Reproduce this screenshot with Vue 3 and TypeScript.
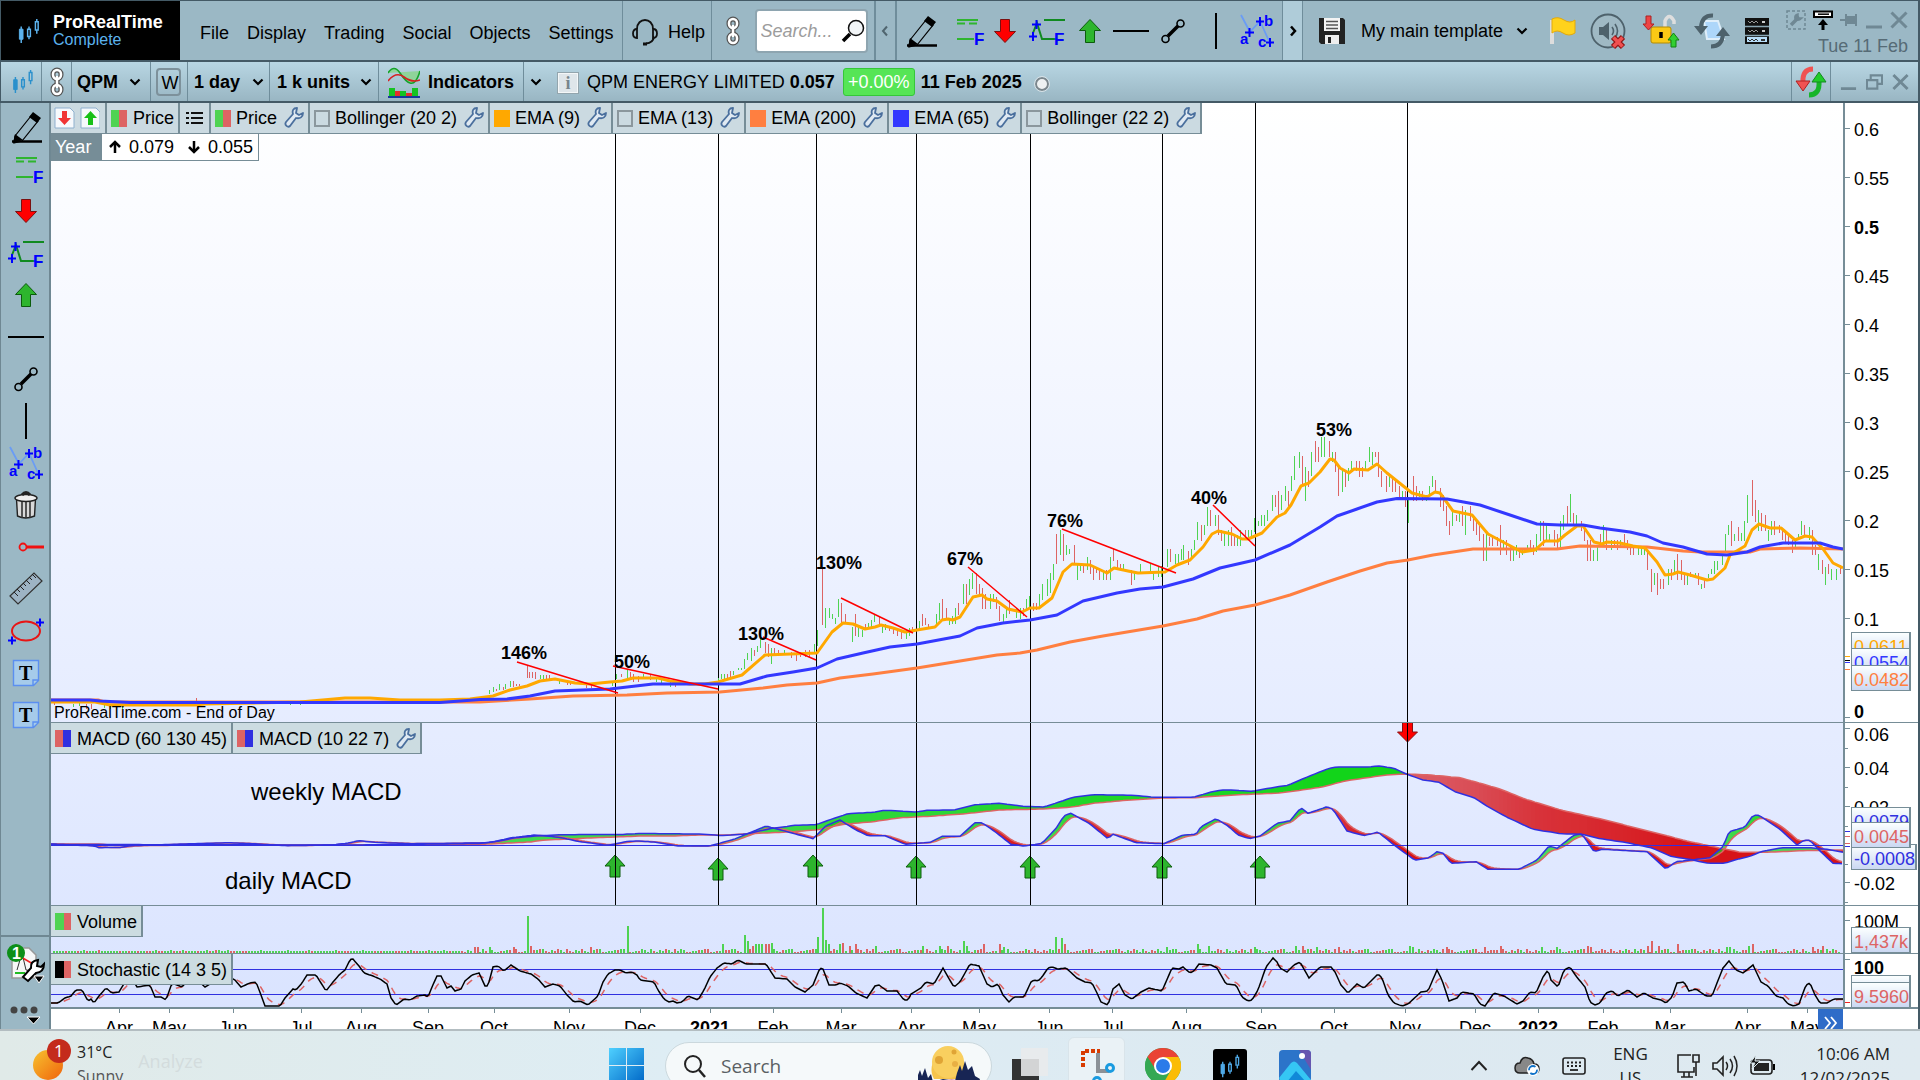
<script setup lang="ts">
import { ref } from 'vue'

type Point = [number, number]

interface Legend {
  label: string
  colors: string[]
  wrench: boolean
  on: boolean
}

interface AxisLabel {
  text: string
  y: number
  bold?: boolean
}

interface PriceTag {
  text: string
  y: number
  color: string
  wide?: boolean
}

// Shared drawing space of the stacked panes
const LEFT = 51
const WIDTH = 1792

const left = (x: number): string => `${((x - LEFT) / WIDTH) * 100}%`
const top = (y: number, y0: number, h: number): string => `${((y - y0) / h) * 100}%`

function points(src: string): Point[] {
  const n = src.trim().split(/\s+/).map(Number)
  const out: Point[] = []
  for (let i = 0; i + 1 < n.length; i += 2) out.push([n[i], n[i + 1]])
  return out
}

function line(pts: Point[]): string {
  return 'M' + pts.map((p) => `${p[0]} ${p[1].toFixed(1)}`).join('L')
}

function resample(pts: Point[], step: number): Point[] {
  const out: Point[] = []
  let k = 0
  for (let x = LEFT; x <= LEFT + WIDTH; x += step) {
    while (k < pts.length - 2 && pts[k + 1][0] < x) k++
    const [x0, y0] = pts[k]
    const [x1, y1] = pts[k + 1]
    const t = Math.min(1, Math.max(0, (x - x0) / (x1 - x0)))
    out.push([x, y0 + (y1 - y0) * t])
  }
  return out
}

function smooth(pts: Point[], factor: number): Point[] {
  let s = pts[0][1]
  return pts.map(([x, y]): Point => {
    s += (y - s) * factor
    return [x, s]
  })
}

interface Band {
  d: string
  fill: string
  opacity: number
}

// Green deepens as the oscillator climbs, red as it falls
function bands(fast: Point[], slow: Point[]): Band[] {
  const out: Band[] = []
  for (let i = 0; i + 1 < fast.length; i++) {
    const gap = (slow[i][1] - fast[i][1] + slow[i + 1][1] - fast[i + 1][1]) / 2
    if (Math.abs(gap) < 0.6) continue
    const y = (fast[i][1] + slow[i][1]) / 2
    const strength = gap > 0 ? 0.75 + (845 - y) / 250 : 0.65 + (y - 770) / 230
    out.push({
      d: line([fast[i], fast[i + 1], slow[i + 1], slow[i]]) + 'Z',
      fill: gap > 0 ? '#12d41a' : '#d61318',
      opacity: Math.min(1, Math.max(0.6, strength))
    })
  }
  return out
}

function bars(src: string): string {
  const n = src.trim().split(/\s+/).map(Number)
  let d = ''
  for (let i = 0; i + 2 < n.length; i += 3) d += `M${n[i] + 0.5} ${n[i + 1]}V${n[i + 2]}`
  return d
}

const ema200 = line(points(`51 700 98 700 105 702 350 702 480 702 530 699 573 696 627 695 667 693 720 692 763 688 787 685
817 683 840 678 873 674 917 668 960 661 997 655 1020 653 1037 650 1070 642 1103 636 1133 631 1163 626 1197 619 1223 611
1255 605 1290 595 1327 582 1360 571 1387 563 1408 560 1433 555 1473 549 1557 549 1580 546 1647 547 1683 551 1700 552
1750 552 1760 549 1800 548 1843 549`))

const ema65 = line(points(`51 700 90 700 100 701 130 702.5 440 702.5 480 699.5 507 699 530 696 555 691 610 689 653 684
740 684 767 676 793 672 817 668 837 659 863 653 890 647 917 644 960 636 977 628 1003 623 1030 620 1057 615 1083 601
1117 593 1140 589 1163 587 1193 579 1220 568 1255 560 1290 545 1320 527 1337 516 1357 509 1377 502 1397 498.5 1447 499
1480 505 1510 515 1537 524 1560 525 1583 525 1600 528 1630 532 1647 536 1663 543 1683 547 1707 554 1727 555 1747 552
1760 547 1783 543 1820 543 1833 547 1843 549`))

const ema9 = line(points(`51 702 95 702 110 705 195 705 205 704 300 702 345 698 370 698 400 700 440 700 470 699 493 696
510 690 527 686 540 681 555 679 575 683 590 684 610 682 622 681 633 678 658 678 670 681 690 684 705 684 718 682 742 675
765 655 817 653 832 632 843 623 853 624 865 629 875 627 881 625 893 628 905 632 917 630 935 627 942 620 948 619 953 620
960 617 973 597 982 595 987 599 997 601 1008 609 1022 612 1030 608 1039 608 1052 598 1063 572 1072 564 1090 565 1107 573
1114 568 1128 571 1138 573 1165 572 1177 565 1190 560 1203 547 1212 534 1218 531 1232 534 1242 539 1248 539 1262 533
1277 517 1285 513 1291 505 1301 486 1309 483 1320 472 1330 459 1334 460 1340 468 1349 473 1354 469 1368 470 1377 464
1387 473 1402 485 1412 493 1427 497 1435 492 1440 493 1453 511 1472 515 1488 534 1503 542 1522 552 1535 550 1545 541
1558 541 1565 535 1577 526 1583 526 1594 542 1602 544 1607 542 1620 543 1633 546 1645 548 1657 562 1665 575 1673 574
1678 572 1690 575 1707 580 1713 579 1725 568 1730 555 1745 546 1752 530 1759 524 1770 528 1781 528 1795 540 1805 536
1812 537 1823 549 1833 563 1843 568`))

const risingBars = bars(`73 704 707 79 703 706 104 703 708 110 704 709 122 705 709 290 702 705 300 702 705 489 690 694 493 687 692
499 684 690 505 684 689 510 681 687 540 675 679 543 675 679 559 680 684 612 681 686 616 674 679 627 670 678 643 674 678
656 677 682 661 678 683 670 682 687 718 678 682 721 674 679 724 674 679 733 671 675 738 668 670 741 668 670 744 659 669
747 653 660 751 648 661 757 646 652 760 637 648 771 648 664 784 650 655 814 644 653 817 630 646 825 608 628 829 608 618
832 614 619 835 618 624 838 599 617 852 627 642 858 628 637 862 630 637 868 623 627 871 620 627 874 614 622 882 625 633
885 624 630 906 632 639 909 628 636 919 621 629 936 614 625 939 603 620 949 618 625 952 616 624 955 608 624 963 584 604
969 579 595 972 573 589 990 594 609 993 594 602 1003 614 622 1006 608 618 1016 608 618 1020 608 619 1026 599 610
1029 596 608 1039 594 609 1042 584 600 1047 579 596 1050 573 593 1053 564 580 1060 530 555 1066 545 555 1069 549 554
1077 564 580 1080 565 571 1087 557 570 1103 570 580 1110 557 580 1123 564 570 1134 571 580 1140 564 573 1150 564 573
1153 571 580 1158 566 577 1161 566 577 1167 549 567 1175 554 564 1178 554 563 1181 549 560 1183 545 560 1191 549 558
1194 540 550 1197 522 540 1204 525 535 1207 507 526 1215 515 526 1224 533 546 1228 530 546 1237 535 546 1240 530 546
1248 530 538 1251 530 538 1254 518 532 1258 521 526 1261 515 526 1264 515 526 1267 510 521 1272 495 511 1281 495 510
1285 486 501 1291 476 491 1294 456 480 1299 452 468 1305 467 501 1311 452 476 1321 437 457 1324 437 457 1332 452 462
1342 470 492 1348 468 481 1351 461 471 1365 461 471 1369 447 462 1372 452 465 1389 476 487 1402 491 500 1408 497 523
1419 491 497 1426 495 501 1429 486 495 1432 476 487 1452 510 526 1459 511 522 1465 510 535 1486 534 561 1503 540 550
1513 550 561 1516 545 555 1522 550 555 1527 545 550 1536 534 552 1540 521 541 1546 525 541 1549 534 541 1560 521 547
1563 515 530 1570 494 522 1576 515 526 1593 550 561 1597 545 561 1603 525 545 1611 540 550 1620 540 547 1638 547 555
1641 547 555 1644 548 555 1654 573 585 1668 569 585 1674 560 573 1687 573 585 1695 573 577 1701 584 589 1708 574 578
1711 569 574 1714 561 574 1717 561 570 1722 555 565 1725 534 553 1728 525 535 1734 534 541 1741 533 541 1744 521 541
1747 495 523 1758 510 531 1768 530 541 1771 521 535 1795 540 549 1798 534 540 1801 521 535 1809 527 540 1818 554 570
1825 567 585 1831 569 580 1836 569 580`)

const fallingBars = bars(`54 702 705 86 704 709 91 704 709 116 705 709 196 698 705 496 689 691 503 687 690 513 681 687 516 684 686
519 684 686 527 665 678 529 672 678 532 672 678 535 672 679 546 675 679 549 675 680 567 681 685 570 681 685 586 684 688
591 684 688 621 674 677 630 672 678 633 674 682 638 676 682 650 675 680 675 683 687 727 674 679 730 671 677 754 650 656
765 642 653 768 644 657 774 648 656 778 650 655 791 652 658 796 653 661 800 652 657 805 650 657 809 650 657 822 569 625
841 603 623 845 614 623 855 614 636 865 624 630 879 616 624 889 626 631 893 628 634 897 630 636 901 630 639 912 627 633
922 614 626 925 618 625 928 624 629 942 599 619 946 608 618 958 603 615 966 584 604 976 573 594 979 584 595 982 588 609
985 594 609 996 597 609 999 606 621 1009 600 614 1023 608 616 1033 603 611 1036 603 610 1056 534 564 1063 534 561
1074 545 565 1083 566 573 1090 560 574 1093 566 580 1096 568 573 1099 568 580 1106 570 580 1113 549 561 1117 560 570
1120 564 570 1131 570 585 1170 549 562 1188 551 565 1201 525 541 1210 510 526 1218 515 535 1221 530 541 1231 527 546
1234 534 546 1245 530 538 1275 495 507 1278 491 515 1288 491 507 1302 456 485 1308 471 487 1315 441 462 1318 447 462
1329 441 457 1335 452 472 1338 466 496 1345 471 487 1356 461 471 1359 461 477 1362 467 477 1375 452 457 1378 452 477
1381 471 487 1386 476 492 1392 476 492 1395 481 492 1399 486 497 1405 491 507 1413 476 501 1416 486 501 1422 491 501
1435 480 492 1440 488 507 1443 495 511 1446 506 526 1449 521 535 1456 515 521 1462 506 526 1470 506 521 1473 515 531
1476 521 535 1479 526 541 1483 534 561 1489 537 546 1492 537 546 1497 537 546 1500 525 555 1506 540 555 1510 545 561
1519 550 558 1530 540 550 1533 545 555 1543 521 546 1554 530 546 1557 534 548 1567 506 525 1573 513 525 1581 521 531
1584 526 541 1587 540 561 1590 540 561 1600 534 547 1606 530 550 1614 540 548 1617 540 550 1624 534 547 1627 540 550
1630 545 555 1633 547 555 1647 550 570 1651 569 592 1657 573 595 1660 579 589 1663 579 589 1671 569 580 1677 554 580
1681 560 580 1684 573 585 1690 572 577 1698 573 585 1704 580 588 1731 521 546 1738 527 541 1752 480 516 1755 500 522
1761 513 531 1765 515 531 1774 521 535 1779 525 533 1782 530 540 1785 530 542 1788 535 545 1792 540 553 1804 525 535
1812 530 555 1815 545 555 1822 560 574 1828 564 574 1840 565 574`)

const weekly = resample(points(`51 844.5 350 845 480 843.5 500 841 513 838 535 836 560 834.7 620 834.5 640 833.5 701 834
722 835.7 746 834 771 828.5 795 825.3 816 824.7 832 819 848 813.7 873 812.3 885 810.3 917 812 926 810.3 954 810 975 804.7
999 803.3 1024 806.3 1044 807 1060 801.7 1073 797.3 1093 794.7 1134 795.3 1154 797.3 1193 797.3 1211 792 1224 789.7
1252 791.3 1280 786.3 1288 785.3 1304 778.3 1329 768.3 1337 767 1370 767 1378 765.7 1394 768.3 1407 774.3 1423 780
1439 782.3 1455 791.7 1474 797.7 1488 806.7 1508 817.7 1533 829.3 1561 833.7 1582 834.3 1598 838.3 1627 842.7 1651 847.7
1672 856.7 1688 859 1708 863.3 1725 863.3 1737 859.3 1749 856.7 1761 851.7 1782 847.7 1810 847.7 1827 849.3 1843 852.3`), 4)

const weeklySignal = resample(points(`51 844 100 844 115 845.5 480 844.5 530 842 545 840 590 838 640 836 671 836 701 835
726 835 758 833.3 783 832.3 816 830 844 824.3 873 821.7 901 817.7 934 816 966 813.7 999 810 1044 809 1073 807 1093 803.3
1126 800.3 1162 798 1195 797.7 1228 795.3 1280 793 1321 787.3 1345 781 1370 777.3 1390 774.7 1407 774 1431 775 1460 777.7
1476 782 1500 789 1525 799 1561 810 1602 819.3 1635 827.7 1664 835 1688 841.3 1721 848.3 1741 852.3 1766 852.3
1802 850.7 1843 850`), 4)

const daily = resample(points(`51 844 95 846 98 847.7 120 847.5 131 845.7 173 844.3 229 842.7 253 843.7 286 845.7 331 845
347 843.3 359 840.7 375 842.3 412 843.7 477 843 490 842.5 510 838 535 835 559 837.3 580 841.7 608 845.3 628 841.3
640 841 656 842.3 677 846 709 846 734 839.3 766 826 787 831.7 813 838.7 826 825.7 840 820 856 830 868 835.7 885 835.7
905 844.3 930 842.3 942 836.3 960 836.3 975 822.7 982 822.7 995 831.7 1011 844.3 1024 846 1042 843.3 1056 828.3
1064 815.7 1071 813.3 1089 823.3 1108 838.7 1113 834.3 1136 842.7 1164 843.7 1183 835 1196 834.3 1201 826.7 1216 818.7
1228 826 1238 835 1250 838.7 1260 836 1277 823.3 1290 820.7 1301 807.7 1308 813.3 1327 806.7 1333 809.3 1347 831
1364 835.7 1378 832 1394 845 1415 860.3 1429 857.7 1437 851.7 1443 853.3 1451 863.3 1476 861.7 1488 869.3 1519 869.3
1537 860 1549 846 1557 848.3 1574 835 1582 834 1594 851.7 1602 849.3 1647 851.7 1666 869 1676 861.7 1710 857.7
1723 846.7 1729 831.7 1745 827 1753 815.3 1759 815.3 1780 829.3 1797 845 1804 840.3 1810 840.3 1819 850 1833 863.3
1843 863.7`), 3)

const dailySignal = smooth(daily, 0.32)
const macdBands = [...bands(weekly, weeklySignal), ...bands(daily, dailySignal)]

const stochasticK = resample(points(`52 1003 58 1003 65 998 71 996 76 990 82 990 88 1001 91 999 94 1003 99 996 106 988 112 993
119 992 125 982 130 975 137 987 150 985 155 997 161 997 166 1000 172 983 182 987 192 975 205 987 220 978 234 979 241 987
250 983 256 982 261 995 265 1006 280 1006 285 998 293 989 296 990 302 983 307 975 316 975 326 991 333 982 340 974 345 970
349 962 352 958 359 966 364 973 373 976 380 979 387 984 391 998 396 1005 404 999 410 1000 417 996 425 995 428 997 432 987
437 976 441 976 447 988 451 986 455 991 461 989 465 981 472 975 479 973 486 988 489 982 493 967 498 966 504 971 511 965
520 971 531 974 538 979 545 987 553 984 560 986 567 995 574 1002 580 1001 588 1005 598 996 603 982 608 974 615 970 620 970
626 973 632 972 637 975 640 980 654 982 658 990 664 999 669 1002 673 1001 677 1003 682 1002 688 996 698 1000 704 990
710 977 717 968 724 963 732 964 738 960 746 964 766 964 775 978 787 979 795 987 805 992 813 985 820 968 823 969 829 985
836 985 840 983 848 986 856 993 867 998 875 986 879 985 887 991 897 991 904 1000 908 1000 911 994 921 988 926 982 934 984
943 968 948 977 954 987 960 982 970 964 979 966 987 984 992 987 998 984 1003 995 1009 1002 1014 997 1024 997 1031 982
1034 980 1038 981 1042 977 1048 968 1052 967 1058 969 1066 968 1077 978 1085 982 1092 983 1097 993 1101 1002 1108 1005
1113 989 1119 984 1125 995 1132 999 1141 992 1149 988 1162 991 1172 968 1179 969 1183 967 1190 973 1194 971 1199 964
1211 965 1217 968 1226 984 1236 985 1242 997 1248 1001 1252 1000 1258 990 1266 967 1273 958 1277 962 1280 968 1287 972
1294 965 1300 962 1309 978 1320 967 1331 967 1335 972 1341 985 1348 993 1357 984 1364 988 1378 974 1382 978 1388 995
1394 1003 1402 1006 1408 1004 1421 992 1428 991 1437 970 1442 980 1449 1001 1457 998 1462 992 1474 994 1480 1004 1485 1006
1494 993 1504 996 1517 1004 1523 1001 1530 992 1536 993 1543 977 1548 970 1551 980 1558 987 1564 970 1570 967 1576 976
1585 987 1590 1002 1595 1005 1600 1003 1606 993 1612 991 1618 996 1628 990 1637 997 1644 993 1653 998 1661 1000 1666 1003
1672 997 1677 983 1684 982 1689 991 1696 989 1706 996 1712 996 1717 983 1723 968 1729 961 1736 970 1743 973 1753 965
1761 982 1768 986 1776 996 1783 998 1788 1004 1794 1006 1799 1004 1806 985 1810 983 1815 995 1820 1003 1827 1003 1834 999
1843 999`), 2)
const stochasticD = smooth(stochasticK, 0.25)

// Volume: quiet sessions get a short bar, busy sessions are listed
function volume(): { up: string; down: string } {
  const busyUp = points(`490 6 528 37 628 27 723 9 745 18 748 12 756 9 759 9 762 9 772 10 818 16 823 45 826 13 829 9 840 9 876 7
923 7 940 7 964 12 967 7 1004 6 1056 16 1062 15 1167 6 1198 9 1209 7 1255 6 1296 7 1317 6 1410 7 1413 6 1542 6 1557 6
1727 6 1730 6 1749 7`)
  const busyDown = points(`475 6 478 6 514 6 531 7 591 6 753 7 766 9 769 9 843 10 850 7 856 9 948 7 984 9 1000 9 1065 9 1303 7
1339 6 1447 6 1485 6 1501 7 1588 7 1591 6 1648 7 1652 12 1659 7 1678 9 1753 9 1813 6 1823 7`)
  const busy = [...busyUp, ...busyDown].map((p) => p[0])
  const bar = (x: number, h: number): string => `M${x} 953V${953 - h}`
  let up = busyUp.map((p) => bar(p[0], p[1])).join('')
  let down = busyDown.map((p) => bar(p[0], p[1])).join('')
  let seed = 7
  for (let x = 54; x < 1842; x += 3) {
    seed = (seed * 1103 + 12345) % 65536
    if (busy.some((b) => Math.abs(b - x) < 2)) continue
    const h = x < 460 ? (seed % 11 === 0 ? 3 : 2) : 1 + ((seed >> 7) % 4)
    if ((seed >> 4) % 10 < (x < 460 ? 3 : 5)) down += bar(x, h)
    else up += bar(x, h)
  }
  return { up, down }
}
const volumeBars = volume()

const cycles = [615, 718, 816, 916, 1030, 1162, 1255, 1407]
const buyArrows: Point[] = [[615, 855], [718, 858], [813, 855], [916, 856], [1030, 856], [1162, 856], [1260, 856]]
const trendLines = 'M517 662L618 693M613 666L718 689M763 637L816 660M841 598L913 633M968 567L1027 617M1062 529L1176 573M1213 505L1255 546'

const gains = [
  { text: '146%', x: 501, y: 644 },
  { text: '50%', x: 614, y: 653 },
  { text: '130%', x: 738, y: 625 },
  { text: '130%', x: 816, y: 554 },
  { text: '67%', x: 947, y: 550 },
  { text: '76%', x: 1047, y: 512 },
  { text: '40%', x: 1191, y: 489 },
  { text: '53%', x: 1316, y: 421 }
]

const priceLegend = ref<Legend[]>([
  { label: 'Price', colors: ['#4fd352', '#dd6464'], wrench: true, on: true },
  { label: 'Bollinger (20 2)', colors: [], wrench: true, on: false },
  { label: 'EMA (9)', colors: ['#ffa800'], wrench: true, on: true },
  { label: 'EMA (13)', colors: [], wrench: true, on: false },
  { label: 'EMA (200)', colors: ['#ff7f40'], wrench: true, on: true },
  { label: 'EMA (65)', colors: ['#3338ff'], wrench: true, on: true },
  { label: 'Bollinger (22 2)', colors: [], wrench: true, on: false }
])
const macdLegend = ref<Legend[]>([
  { label: 'MACD (60 130 45)', colors: ['#dd6464', '#3030e0'], wrench: false, on: true },
  { label: 'MACD (10 22 7)', colors: ['#dd6464', '#3030e0'], wrench: true, on: true }
])

function swatch(item: Legend): Record<string, string> {
  if (!item.colors.length) return {}
  const [a, b] = item.colors
  return { background: `linear-gradient(90deg, ${a} 50%, ${b ?? a} 50%)`, border: '0' }
}

const priceAxis: AxisLabel[] = [0.6, 0.55, 0.5, 0.45, 0.4, 0.35, 0.3, 0.25, 0.2, 0.15, 0.1, 0].map((v) => ({
  text: String(v),
  y: 716.5 - v * 981,
  bold: v === 0.5 || v === 0
}))
const macdAxis: AxisLabel[] = [
  { text: '0.06', y: 728 },
  { text: '0.04', y: 767 },
  { text: '0.02', y: 806 },
  { text: '-0.02', y: 882 }
]
const macdMinor = [748, 787, 826, 864, 902]
const priceTags: PriceTag[] = [
  { text: '0.0611', y: 632, color: '#ffa800' },
  { text: '0.0554', y: 648, color: '#3338ff' },
  { text: '0.0482', y: 665, color: '#ff7f40' }
]
const macdTags: PriceTag[] = [
  { text: '-0.0008', y: 844, color: '#3030e0', wide: true },
  { text: '0.0079', y: 807, color: '#3030e0' },
  { text: '0.0045', y: 822, color: '#dd6464' }
]
const priceMarks = [{ y: 656, c: '#ffa800' }, { y: 660, c: '#000' }, { y: 662, c: '#3338ff' }, { y: 669, c: '#ff7f40' }]
const macdMarks = [{ y: 831, c: '#3030e0' }, { y: 836, c: '#dd6464' }, { y: 843, c: '#dd6464' }, { y: 846, c: '#3030e0' }]

const months: { t: string; x: number }[] = [
  { t: 'Apr', x: 119 }, { t: 'May', x: 169 }, { t: 'Jun', x: 233 }, { t: 'Jul', x: 301 }, { t: 'Aug', x: 361 },
  { t: 'Sep', x: 428 }, { t: 'Oct', x: 494 }, { t: 'Nov', x: 569 }, { t: 'Dec', x: 640 }, { t: '2021', x: 710 },
  { t: 'Feb', x: 773 }, { t: 'Mar', x: 841 }, { t: 'Apr', x: 911 }, { t: 'May', x: 979 }, { t: 'Jun', x: 1049 },
  { t: 'Jul', x: 1112 }, { t: 'Aug', x: 1186 }, { t: 'Sep', x: 1261 }, { t: 'Oct', x: 1334 }, { t: 'Nov', x: 1405 },
  { t: 'Dec', x: 1475 }, { t: '2022', x: 1538 }, { t: 'Feb', x: 1603 }, { t: 'Mar', x: 1670 }, { t: 'Apr', x: 1747 },
  { t: 'May', x: 1807 }
]

const menus = ['File', 'Display', 'Trading', 'Social', 'Objects', 'Settings']
const quickTools = [
  { id: 'pencil', w: 48 }, { id: 'fib', w: 44 }, { id: 'down', w: 33 }, { id: 'fibx', w: 51 }, { id: 'up', w: 34 },
  { id: 'hline', w: 48 }, { id: 'segment', w: 36 }, { id: 'vline', w: 50 }, { id: 'abc', w: 32 }
]
const sideTools = ['pencil', 'fib', 'down', 'fibx', 'up', 'hline', 'segment', 'vline', 'abc', 'trash', 'ray', 'ruler', 'ellipse', 'note', 'note']
const query = ref('')
</script>

<template>
  <svg class="defs" aria-hidden="true">
    <symbol id="i-pencil" viewBox="0 0 36 36">
      <path d="M7 27 23 7l7 5-16 20-8 2z" fill="none" stroke="#000" stroke-width="1.2" />
      <path d="m21 8 4-5 8 6-4 5zM5 34l2-9 8 6z" fill="#000" />
      <path d="M4 32.500h30" stroke="#000" stroke-width="2.500" />
    </symbol>
    <symbol id="i-fib" viewBox="0 0 36 36">
      <path d="M8 7h21M8 10.500h8m4 0h8M8 26h17" stroke="#2fb52f" stroke-width="1.800" />
      <text x="25" y="32" class="glyph big">F</text>
    </symbol>
    <symbol id="i-down" viewBox="0 0 36 36">
      <path d="M13.500 6.500h9v12h6L18 29.500 7.500 18.500h6z" fill="#f00" stroke="#7a1010" />
    </symbol>
    <symbol id="i-up" viewBox="0 0 36 36">
      <path d="M13.500 29.500h9v-12h6L18 6.500 7.500 17.500h6z" fill="#2db52d" stroke="#0c5c0c" />
    </symbol>
    <symbol id="i-fibx" viewBox="0 0 36 36">
      <path d="m4 20 4-10 5 16h14M15 7h21" fill="none" stroke="#108a20" stroke-width="2" />
      <path d="M3 11.500h9M7.500 7v9M0 23.500h8M4 19v9" stroke="#00f" stroke-width="2" />
      <text x="25" y="32" class="glyph big">F</text>
    </symbol>
    <symbol id="i-hline" viewBox="0 0 36 36"><path d="M0 18h36" stroke="#000" stroke-width="2" /></symbol>
    <symbol id="i-vline" viewBox="0 0 36 36"><path d="M18 0v36" stroke="#000" stroke-width="2" /></symbol>
    <symbol id="i-segment" viewBox="0 0 36 36">
      <path d="m13 23 10-10" stroke="#000" stroke-width="3.500" />
      <circle cx="10.500" cy="26" r="3.500" fill="none" stroke="#000" stroke-width="1.600" />
      <circle cx="25.500" cy="10.500" r="3.500" fill="none" stroke="#000" stroke-width="1.600" />
    </symbol>
    <symbol id="i-abc" viewBox="0 0 36 36">
      <path d="m2 2 9 17 10-11 9 20" fill="none" stroke="#6a9cf5" stroke-width="1.800" />
      <path d="M6 19.500h9M10.500 15v9M17 8.500h8M21 4v9M27 29.500h8M31 25v9" stroke="#00f" stroke-width="2" />
      <text x="1" y="31" class="glyph">a</text><text x="25" y="13" class="glyph">b</text><text x="19" y="34" class="glyph">c</text>
    </symbol>
    <symbol id="i-trash" viewBox="0 0 36 36">
      <path d="m8.500 12 1 17q8 4 17 0l1-17z" fill="#d9d9d9" stroke="#222" stroke-width="1.400" />
      <path d="M14 14v17M18 14v17M22 14v17" stroke="#333" stroke-width="1.600" />
      <ellipse cx="18" cy="11" rx="11" ry="3.500" fill="#eee" stroke="#222" stroke-width="1.400" />
      <path d="M14 8q4-5 8 0" fill="none" stroke="#222" stroke-width="3" />
    </symbol>
    <symbol id="i-ray" viewBox="0 0 36 36">
      <path d="M18 18h18" stroke="#f01010" stroke-width="3" />
      <circle cx="15" cy="18" r="3.500" fill="none" stroke="#f01010" stroke-width="1.800" />
    </symbol>
    <symbol id="i-ruler" viewBox="0 0 36 36">
      <path d="M2 25 26 2l8 8-24 23z" fill="#9db3c4" stroke="#333" stroke-width="1.200" />
      <path d="m6 21 4 4m-1-7 3 3m0-6 4 4m-1-7 3 3m0-6 4 4m-1-7 3 3m0-6 4 4" stroke="#222" />
    </symbol>
    <symbol id="i-ellipse" viewBox="0 0 36 36">
      <ellipse cx="18" cy="18" rx="14" ry="9.500" fill="none" stroke="#e81515" stroke-width="2" />
      <path d="M0 27.500h8M4 23.500v8M28 9.500h8M32 5.500v8" stroke="#00f" stroke-width="2" />
    </symbol>
    <symbol id="i-note" viewBox="0 0 36 36">
      <path d="M5.500 5.500h25v20l-5 5h-20zM25 30v-5h5" fill="#a6cbea" stroke="#5b8ff0" stroke-width="1.400" />
      <text x="11" y="25" class="serif">T</text>
    </symbol>
    <symbol id="i-wrench" viewBox="0 0 20 22">
      <path d="M13 1c-4 0-5 3-4 6l-7 8c-2 3 2 6 4 4l6-8c4 1 7-1 7-5l-4 2-3-2z" fill="#dfe9f2" stroke="#4a6f9d" stroke-width="1.800" stroke-linejoin="round" />
    </symbol>
    <symbol id="i-chevron" viewBox="0 0 14 14"><path d="m2.500 4.500 4.500 4.500 4.500-4.500" fill="none" stroke="#000" stroke-width="2.200" /></symbol>
    <symbol id="i-candles" viewBox="0 0 24 28">
      <path d="M3.500 9v18M12 9v3m0 8v3M20.500 1v3m0 9v4" stroke="currentColor" stroke-width="1.600" />
      <path d="M1.500 12h4v11h-4z" fill="currentColor" stroke="currentColor" />
      <path d="M10.500 12h3v8h-3zM19 4h3v9h-3z" fill="none" stroke="currentColor" stroke-width="1.600" />
    </symbol>
    <symbol id="i-link" viewBox="0 0 16 30">
      <g fill="none" stroke="#555" stroke-width="5"><rect x="4" y="3" width="8" height="9" rx="4" /><rect x="4" y="18" width="8" height="9" rx="4" /><path d="M8 9v12" /></g>
      <g fill="none" stroke="#fff" stroke-width="2.500"><rect x="4" y="3" width="8" height="9" rx="4" /><rect x="4" y="18" width="8" height="9" rx="4" /><path d="M8 9v12" /></g>
    </symbol>
    <symbol id="i-close" viewBox="0 0 18 18"><path d="m1.500 1.500 15 15m0-15-15 15" stroke="#6f8894" stroke-width="3" /></symbol>
    <symbol id="i-min" viewBox="0 0 18 18"><path d="M1 16h16" stroke="#6f8894" stroke-width="3" /></symbol>
  </svg>

  <div class="screen">
    <header class="topbar">
      <div class="brand">
        <svg class="brand-mark" width="22" height="26"><use href="#i-candles" /></svg>
        <div class="brand-text"><strong>ProRealTime</strong><span>Complete</span></div>
      </div>
      <nav class="menu"><button v-for="m in menus" :key="m">{{ m }}</button></nav>
      <button class="cell help">
        <svg width="26" height="28" viewBox="0 0 26 28" fill="none" stroke="#111" stroke-width="1.800">
          <path d="M5 11c0-12 16-12 16 0M22 19q-1 6-8 6.500" />
          <path d="M5 11q-4 0-4 4.500T5 20zM21 11q4 0 4 4.500T21 20z" /><path d="M11 26h4" stroke-width="3" />
        </svg>
        Help
      </button>
      <div class="cell finder">
        <svg width="16" height="30"><use href="#i-link" /></svg>
        <label class="search">
          <input v-model="query" type="text" placeholder="Search..." aria-label="Search" />
          <svg width="24" height="24" viewBox="0 0 24 24"><circle cx="15" cy="9" r="7.500" fill="#f2f5f7" stroke="#111" stroke-width="1.500" /><path d="m9 15-7 7" stroke="#000" stroke-width="3.500" /></svg>
        </label>
      </div>
      <button class="cell scroll-left" aria-label="Previous tools"><svg width="10" height="14" viewBox="0 0 10 14"><path d="M7 2.500 3 7l4 4.500" fill="none" stroke="#50656f" stroke-width="2" /></svg></button>
      <div class="cell quick">
        <button v-for="t in quickTools" :key="t.id" :style="{ width: t.w + 'px' }" :aria-label="t.id"><svg width="36" height="36"><use :href="'#i-' + t.id" /></svg></button>
      </div>
      <button class="cell scroll-right" aria-label="More tools"><svg width="10" height="14" viewBox="0 0 10 14"><path d="m3 2.500 4 4.500-4 4.500" fill="none" stroke="#000" stroke-width="2.500" /></svg></button>
      <div class="cell template">
        <svg width="28" height="28" viewBox="0 0 28 28"><path d="M1 1h24l2 2v24H3l-2-2z" fill="#222" /><path d="M6 1h16v13H6z" fill="#f4f4f4" /><path d="M8 4.500h12M8 8h12M8 11.500h12" stroke="#555" stroke-width="1.500" /><path d="M7 18h14v9H7z" fill="#eee" /><path d="M10 20h3v6h-3z" fill="#222" /></svg>
        <label class="pick">
          <select aria-label="Template"><option>My main template</option></select>
          <svg width="14" height="14"><use href="#i-chevron" /></svg>
        </label>
      </div>
      <div class="status">
        <button aria-label="Flag"><svg width="26" height="28" viewBox="0 0 26 28"><path d="M2 3v24" stroke="#ddd" stroke-width="4" /><path d="M2 2q6-3 12 1t11 0v13q-6 4-12 0T2 16z" fill="#ffd21c" stroke="#e2a90c" /></svg></button>
        <button aria-label="Sound"><svg width="38" height="38" viewBox="0 0 38 38"><circle cx="18" cy="19" r="16.500" fill="#9fb9c4" stroke="#4e626c" stroke-width="1.800" /><path d="M9 15h4l6-5v18l-6-5H9z" fill="#4e626c" /><path d="M22 15q3 4 0 8m3-11q5 7 0 14" fill="none" stroke="#4e626c" stroke-width="1.600" /><path d="m23 25 10 10m0-10L23 35" stroke="#8e1515" stroke-width="6" /><path d="m23.500 25.500 9 9m0-9-9 9" stroke="#f05050" stroke-width="3.500" /></svg></button>
        <button aria-label="Lock"><svg width="38" height="34" viewBox="0 0 38 34"><path d="M23 14V7q4-9 9 0v3" fill="none" stroke="#dedede" stroke-width="3.500" /><rect x="9" y="13" width="20" height="16" rx="2" fill="#fac915" stroke="#b38b06" /><path d="M19 18v6" stroke="#000" stroke-width="3.500" /><path d="M4 2h5v8h3l-5.500 6L1 10h3z" fill="#ee4444" stroke="#a22" /><path d="M29 33h5v-7h3l-5.500-7-5.500 7h3z" fill="#32cf32" stroke="#138013" /></svg></button>
        <button aria-label="Synchronise"><svg width="36" height="36" viewBox="0 0 36 36"><path d="M10 8h14l6 18H13z" fill="#add6fa" stroke="#dfeefa" stroke-width="2" /><path d="M19 2.500Q8 2 7 14m10 19.500q11 0 12-12" fill="none" stroke="#4e626c" stroke-width="4" /><path d="m0 13 7 9 7-9zM22 23l7-9 7 9z" fill="#4e626c" /></svg></button>
        <button aria-label="Servers"><svg width="26" height="28" viewBox="0 0 26 28"><path d="M1 1h24v26H1z" fill="#111" /><path d="M3 20h20v5H3z" fill="#b8defa" /><path d="M1 9.500h24M1 18.500h24" stroke="#8ba7b4" stroke-width="1.500" /><path d="m4 4 2 2 2-2 2 2 2-2 2 2m-10 7 2 2 2-2 2 2 2-2 2 2" fill="none" stroke="#999" /><path d="m4 22 2 2 2-2 2 2 2-2 2 2" fill="none" stroke="#333" /><path d="M18 5h3m-3 9h3" stroke="#ccc" stroke-width="2" /><path d="M17 23h4" stroke="#333" stroke-width="2" /></svg></button>
      </div>
      <div class="window">
        <div class="window-icons">
          <svg width="20" height="20" viewBox="0 0 20 20"><path d="M1 1h18v18H1z" fill="none" stroke="#6f8894" stroke-width="1.500" stroke-dasharray="3 2" /><path d="m5 15 6-6" stroke="#6f8894" stroke-width="3.500" /><path d="M12 4q-4 1-3 5 3 3 7-1l-3 0-1-2z" fill="#6f8894" stroke="#6f8894" stroke-width="1.500" /></svg>
          <svg width="20" height="20" viewBox="0 0 20 20"><path d="M1 1.500h18v5.500H1z" fill="#fff" stroke="#000" stroke-width="2" /><path d="M5 4.200h11" stroke="#000" stroke-width="1.500" /><path d="M10 20v-6" stroke="#000" stroke-width="3" /><path d="m5 15 5-6 5 6z" /></svg>
          <svg width="18" height="18" viewBox="0 0 18 18"><path d="M0 9h6m0-6v12m1-9h8v6H7zm9-3v12" fill="#6f8894" stroke="#6f8894" stroke-width="2" /></svg>
          <svg width="18" height="18"><use href="#i-min" /></svg>
          <svg width="18" height="18"><use href="#i-close" /></svg>
        </div>
        <span>Tue 11 Feb</span>
      </div>
    </header>

    <div class="chartbar">
      <button class="bar-cell mark" aria-label="Chart type"><svg width="22" height="25"><use href="#i-candles" /></svg></button>
      <button class="bar-cell chain" aria-label="Link chart"><svg width="16" height="30"><use href="#i-link" /></svg></button>
      <label class="bar-cell pick sym"><select aria-label="Instrument"><option>QPM</option></select><svg width="14" height="14"><use href="#i-chevron" /></svg></label>
      <div class="bar-cell watch"><button>W</button></div>
      <label class="bar-cell pick frame"><select aria-label="Timeframe"><option>1 day</option></select><svg width="14" height="14"><use href="#i-chevron" /></svg></label>
      <label class="bar-cell pick units"><select aria-label="Units"><option>1 k units</option></select><svg width="14" height="14"><use href="#i-chevron" /></svg></label>
      <button class="bar-cell indicators">
        <svg width="32" height="32" viewBox="0 0 32 32"><path d="M0 7q6-9 12 0t10 10q6 2 10-12" fill="#8fd49a" stroke="#15a32a" stroke-width="1.600" /><path d="M0 15q8-10 16-4t16 3" fill="none" stroke="#d62020" stroke-width="1.600" /><path d="M1 22h6v9H1zM12 25h6v6h-6zM24 22h6v9h-6z" fill="#15c322" /><path d="M7 25h5v6H7zM18 27h6v4h-6z" fill="#e42c2c" /><path d="M0 31h32" stroke="#163a9a" stroke-width="2" /></svg>
        Indicators
      </button>
      <button class="ind-more" aria-label="Indicator list"><svg width="14" height="14"><use href="#i-chevron" /></svg></button>
      <span class="info">i</span>
      <h1>QPM ENERGY LIMITED <b>0.057</b></h1>
      <span class="change">+0.00%</span>
      <time class="day">11 Feb 2025</time>
      <span class="dot"></span>
      <div class="chart-window">
        <button class="refresh" aria-label="Refresh"><svg width="32" height="32" viewBox="0 0 32 32"><path d="M18 3Q7 3 8 17" fill="none" stroke="#f05252" stroke-width="5" /><path d="m1 15 7 10 7-10z" fill="#f05252" stroke="#b02020" /><path d="M14 29q11 0 10-14" fill="none" stroke="#16b52a" stroke-width="5" /><path d="m17 16 7-10 7 10z" fill="#20cc2a" stroke="#128a20" /></svg></button>
        <svg width="17" height="18" viewBox="0 0 18 18"><use href="#i-min" /></svg>
        <svg width="17" height="18" viewBox="0 0 18 18"><path d="M5 6V2h12v9h-4M1 7h11v9H1z" fill="none" stroke="#6f8894" stroke-width="2.200" /></svg>
        <svg width="17" height="18" viewBox="0 0 18 18"><use href="#i-close" /></svg>
      </div>
    </div>

    <div class="work">
      <aside class="tools">
        <button v-for="(t, i) in sideTools" :key="i" :aria-label="t"><svg width="36" height="36"><use :href="'#i-' + t" /></svg></button>
        <div class="tools-foot">
          <button aria-label="Chart settings">
            <svg width="40" height="42" viewBox="0 0 40 42"><path d="M7 6h17l7 7v23H7z" fill="#f7f7f7" stroke="#999" stroke-width="1.500" /><path d="m12 28 5-17 4 17 8 1" fill="none" stroke="#333" /><path d="m16 15 12 7" stroke="#e22" stroke-width="1.500" /><path d="M10 31h10" stroke="#2b2" stroke-width="2" /><path d="m18 35 8-9q-1-7 7-8l-1 6 4 1 3-3q0 8-8 9l-8 8z" fill="#fff" stroke="#000" stroke-width="2" /><path d="M29 34h10l-5 7z" fill="#000" stroke="#fff" /><circle cx="11" cy="11" r="9" fill="#0c8f18" /><text x="7" y="17" class="count">1</text></svg>
          </button>
          <button aria-label="More"><svg width="34" height="28" viewBox="0 0 34 28"><circle cx="6" cy="9" r="3.500" fill="#444" /><circle cx="16" cy="9" r="3.500" fill="#444" /><circle cx="26" cy="9" r="3.500" fill="#444" /><path d="M19 16h13l-6.500 7z" stroke="#fff" /></svg></button>
        </div>
      </aside>

      <main class="panes">
        <section class="pane price">
          <div class="plot">
            <svg class="canvas" viewBox="51 103 1792 619" preserveAspectRatio="none">
              <path v-for="x in cycles" :key="x" :d="`M${x + 0.5} 103V722`" class="cycle" />
              <path :d="risingBars" stroke="#4fd352" /><path :d="fallingBars" stroke="#dd6464" />
              <g class="ema"><path :d="ema200" stroke="#ff7f40" /><path :d="ema9" stroke="#ffa800" /><path :d="ema65" stroke="#3338ff" /></g>
              <path :d="trendLines" stroke="#f00" stroke-width="1.500" fill="none" />
            </svg>
            <div class="legend">
              <span class="item arrows">
                <svg width="46" height="22" viewBox="0 0 46 22"><path d="M1 1h15l4 4v16H1zM27 1h15l4 4v16H27z" fill="#f6f9fc" stroke="#8fb0ce" /><path d="M8 4h5v7h4l-6.500 7L4 11h4z" fill="#f03434" /><path d="M34 18h5v-7h4l-6.500-7L30 11h4z" fill="#18c018" /></svg>
              </span>
              <span class="item"><i class="chip" :style="{ background: 'linear-gradient(90deg,#4fd352 50%,#dd6464 50%)' }"></i>Price</span>
              <span class="item list"><svg width="17" height="14" viewBox="0 0 17 14"><path d="M5 2h12M5 7h12M5 12h12M0 2h3M0 7h3M0 12h3" stroke="#111" stroke-width="2.200" /></svg></span>
              <label v-for="l in priceLegend" :key="l.label" class="item"><input v-model="l.on" type="checkbox" class="chip" :style="swatch(l)" />{{ l.label }}<svg v-if="l.wrench" class="wrench" width="20" height="22"><use href="#i-wrench" /></svg></label>
            </div>
            <div class="year">
              <span class="year-name">Year</span>
              <span class="year-vals">
                <svg width="12" height="14" viewBox="0 0 12 14"><path d="M6 13V4" stroke="#000" stroke-width="2.500" /><path d="M1 7l5-5 5 5" fill="none" stroke="#000" stroke-width="2.500" /></svg>0.079
                <svg class="low" width="12" height="14" viewBox="0 0 12 14"><path d="M6 1v9" stroke="#000" stroke-width="2.500" /><path d="m1 7 5 5 5-5" fill="none" stroke="#000" stroke-width="2.500" /></svg>0.055
              </span>
            </div>
            <b v-for="(g, i) in gains" :key="i" class="tag-text" :style="{ left: left(g.x), top: top(g.y, 103, 619) }">{{ g.text }}</b>
            <span class="source">ProRealTime.com - End of Day</span>
          </div>
          <div class="axis">
            <template v-for="a in priceAxis" :key="a.text">
              <i class="tick" :style="{ top: top(a.y, 103, 619) }"></i>
              <span :class="['value', { bold: a.bold, zero: a.text === '0' }]" :style="{ top: top(a.y, 103, 619) }">{{ a.text }}</span>
            </template>
            <i v-for="m in priceMarks" :key="m.y" class="tick" :style="{ top: top(m.y, 103, 619), background: m.c }"></i>
            <span v-for="t in priceTags" :key="t.text" class="price-tag" :style="{ top: top(t.y, 103, 619), color: t.color }">{{ t.text }}</span>
          </div>
        </section>

        <section class="pane macd">
          <div class="plot">
            <svg class="canvas" viewBox="51 723 1792 182" preserveAspectRatio="none">
              <path v-for="(b, i) in macdBands" :key="i" :d="b.d" :fill="b.fill" :opacity="b.opacity" shape-rendering="crispEdges" />
              <g class="osc">
                <path :d="line(weeklySignal)" stroke="#dd6464" /><path :d="line(dailySignal)" stroke="#dd6464" />
                <path :d="line(weekly)" stroke="#3030e0" /><path :d="line(daily)" stroke="#3030e0" />
              </g>
              <path d="M51 845.500H1843" stroke="#3030e0" />
              <path v-for="a in buyArrows" :key="a[0]" :d="`M${a[0] - 5} ${a[1] + 22}h10v-11h5l-10-11-10 11h5z`" fill="#2db52d" stroke="#0c5c0c" />
              <path d="M1402.500 722v10h-5l10 10 10-10h-5v-10z" fill="#f00" stroke="#8a1010" />
              <path v-for="x in cycles" :key="x" :d="`M${x + 0.5} 723V905`" class="cycle" />
            </svg>
            <div class="legend lower">
              <label v-for="l in macdLegend" :key="l.label" class="item"><input v-model="l.on" type="checkbox" class="chip" :style="swatch(l)" />{{ l.label }}<svg v-if="l.wrench" class="wrench" width="20" height="22"><use href="#i-wrench" /></svg></label>
            </div>
            <span class="note-text" :style="{ left: left(251), top: top(780, 723, 182) }">weekly MACD</span>
            <span class="note-text" :style="{ left: left(225), top: top(869, 723, 182) }">daily MACD</span>
          </div>
          <div class="axis">
            <template v-for="a in macdAxis" :key="a.text">
              <i class="tick" :style="{ top: top(a.y, 723, 182) }"></i>
              <span :class="['value', { first: a.text === '0.06' }]" :style="{ top: top(a.y, 723, 182) }">{{ a.text }}</span>
            </template>
            <i v-for="m in macdMinor" :key="m" class="tick minor" :style="{ top: top(m, 723, 182) }"></i>
            <i v-for="m in macdMarks" :key="m.y" class="tick" :style="{ top: top(m.y, 723, 182), background: m.c }"></i>
            <span v-for="t in macdTags" :key="t.text" :class="['price-tag', { wide: t.wide }]" :style="{ top: top(t.y, 723, 182), color: t.color }">{{ t.text }}</span>
          </div>
        </section>

        <section class="pane vol">
          <div class="plot">
            <svg class="canvas" viewBox="51 906 1792 47" preserveAspectRatio="none">
              <path :d="volumeBars.up" stroke="#4fd352" stroke-width="2" /><path :d="volumeBars.down" stroke="#dd6464" stroke-width="2" />
            </svg>
            <div class="legend lower"><span class="item"><i class="chip" :style="{ background: 'linear-gradient(90deg,#4fd352 55%,#dd6464 55%)' }"></i>Volume</span></div>
          </div>
          <div class="axis">
            <i class="tick" :style="{ top: top(920, 906, 47) }"></i><span class="value" :style="{ top: top(920, 906, 47) }">100M</span>
            <span class="price-tag" :style="{ top: top(927, 906, 47), color: '#dd6464' }">1,437k</span>
          </div>
        </section>

        <section class="pane stoch">
          <div class="plot">
            <svg class="canvas" viewBox="51 954 1792 53" preserveAspectRatio="none">
              <path d="M51 969.500H1843M51 994.500H1843" stroke="#3030e0" />
              <path :d="line(stochasticD)" stroke="#dd6464" stroke-width="1.500" stroke-dasharray="7 6" fill="none" />
              <path :d="line(stochasticK)" stroke="#000" stroke-width="1.500" fill="none" />
            </svg>
            <div class="legend lower"><span class="item"><i class="chip" :style="{ background: 'linear-gradient(90deg,#000 55%,#dd6464 55%)' }"></i>Stochastic (14 3 5)</span></div>
          </div>
          <div class="axis">
            <i class="tick" :style="{ top: top(959, 954, 53) }"></i><span class="value bold hundred" :style="{ top: top(959, 954, 53) }">100</span>
            <i class="tick" :style="{ top: top(1002, 954, 53), background: '#e22' }"></i>
            <span class="price-tag" :style="{ top: top(975, 954, 53) }"></span>
            <span class="price-tag" :style="{ top: top(982, 954, 53), color: '#dd6464' }">9.5960</span>
          </div>
        </section>

        <div class="timeline">
          <div class="months">
            <template v-for="m in months" :key="m.x">
              <i :style="{ left: left(m.x) }"></i>
              <span :class="{ bold: m.t.startsWith('20') }" :style="{ left: left(m.x) }">{{ m.t }}</span>
            </template>
            <button class="latest" aria-label="Latest"><svg width="14" height="14" viewBox="0 0 14 14"><path d="m1 1 5 6-5 6M7 1l5 6-5 6" fill="none" stroke="#fff" stroke-width="1.800" /></svg></button>
          </div>
        </div>
      </main>
    </div>

    <footer class="taskbar">
      <div class="task-row">
        <div class="weather">
          <svg width="46" height="48" viewBox="0 0 46 48">
            <defs><linearGradient id="sun" x1="0" y1="0" x2="1" y2="1"><stop offset="0" stop-color="#f7c22f" /><stop offset="1" stop-color="#f0640c" /></linearGradient></defs>
            <circle cx="17" cy="30" r="15" fill="url(#sun)" /><circle cx="28" cy="16" r="12" fill="#c42b1c" /><text x="23" y="22" class="badge">1</text>
          </svg>
          <div class="temp"><span>31°C</span><span class="sky">Sunny</span></div>
          <span class="ghost">Analyze</span>
        </div>
        <div class="apps">
          <svg width="36" height="36" viewBox="0 0 36 36"><defs><linearGradient id="win" x1="0" y1="0" x2="1" y2="1"><stop offset="0" stop-color="#4fd0ff" /><stop offset="1" stop-color="#0067c7" /></linearGradient></defs><path d="M0 0h17v17H0zM18 0h17v17H18zM0 18h17v17H0zM18 18h17v17H18z" fill="url(#win)" /></svg>
          <label class="task-search">
            <svg width="24" height="24" viewBox="0 0 24 24"><circle cx="10" cy="10" r="8" fill="none" stroke="#222" stroke-width="2" /><path d="m16 16 6 7" stroke="#222" stroke-width="2.500" /></svg>
            <input type="text" placeholder="Search" aria-label="Search the computer" />
            <svg class="moon" width="68" height="46" viewBox="0 0 68 46"><path d="M17 34a17 18 0 1 1 29 0z" fill="#f6c44c" /><circle cx="31" cy="17" r="16" fill="#f9cf5f" /><circle cx="22" cy="15" r="4" fill="#e0a435" /><circle cx="37" cy="7" r="2.500" fill="#e0a435" /><circle cx="38" cy="19" r="3" fill="#e8b044" /><path d="M1 40V30l2-5 2 6 3-8 3 10 3-4 2 8 10-3 12 2 2-8 3-8 2 6 3-10 3 9 4-4 3 10 5 3-3 9H1z" fill="#172554" /><path d="M20 38q15-7 28 0z" fill="#b3455a" /></svg>
          </label>
          <svg width="36" height="36" viewBox="0 0 36 36"><path d="M0 11h27v25H0z" fill="#333" /><path d="M9 0h27v28H9z" fill="#e9eaec" opacity=".88" /></svg>
          <span class="tile">
            <svg width="36" height="38" viewBox="0 0 36 38"><path d="M4 20V4h17" fill="none" stroke="#d83b01" stroke-width="4" stroke-dasharray="4 2" /><path d="M19 6v18h11" fill="none" stroke="#8b9197" stroke-width="4" /><circle cx="31" cy="21" r="3.500" fill="none" stroke="#1a9be0" stroke-width="3" /><circle cx="18" cy="34" r="3.500" fill="none" stroke="#1a9be0" stroke-width="3" /></svg>
          </span>
          <svg width="36" height="36" viewBox="0 0 36 36"><circle cx="18" cy="18" r="18" fill="#34a853" /><path d="M18 18 2.400 9A18 18 0 0 1 33.600 9z" fill="#ea4335" /><path d="M18 9h15.600A18 18 0 0 1 18 36l8-14z" fill="#fbbc05" /><path d="M18 9V2L2.400 9l8 13z" fill="#ea4335" /><path d="M2.400 9 11 22l8 5-3 9A18 18 0 0 1 2.400 9z" fill="#34a853" /><circle cx="18" cy="18" r="9" fill="#fff" /><circle cx="18" cy="18" r="7" fill="#2a7be9" /></svg>
          <span class="prt"><svg width="22" height="24"><use href="#i-candles" /></svg></span>
          <svg class="photos" width="32" height="32" viewBox="0 0 32 32"><rect width="32" height="32" rx="4" fill="#2c74c9" /><path d="M20 0h8q4 0 4 4v16z" fill="#6656b0" /><path d="M0 28 12 13q3-3 6 0l14 17v2H2z" fill="#35c6f4" /><path d="M8 32 17 21l10 11z" fill="#1189d8" /><circle cx="23" cy="6" r="3" fill="#fff" /></svg>
        </div>
        <div class="tray">
          <svg class="t1" width="18" height="12" viewBox="0 0 18 12"><path d="m1.500 10 7.500-8 7.500 8" fill="none" stroke="#222" stroke-width="2" /></svg>
          <svg class="t2" width="26" height="22" viewBox="0 0 26 22"><path d="M6 18q-5 0-5-5t5-5q2-7 8-5 5 1 6 6 5 0 5 5t-5 4z" fill="#888" stroke="#222" stroke-width="1.500" /><circle cx="19" cy="15" r="6" fill="#fff" /><circle cx="19" cy="15" r="4" fill="none" stroke="#1173c9" stroke-width="1.800" stroke-dasharray="9 3" /></svg>
          <svg class="t3" width="24" height="18" viewBox="0 0 24 18"><rect x="1" y="1" width="22" height="16" rx="2" fill="none" stroke="#222" stroke-width="1.600" /><path d="M5 5.500h14M5 9h14" stroke="#222" stroke-width="2" stroke-dasharray="2 2" /><path d="M8 13h8" stroke="#222" stroke-width="1.800" /></svg>
          <span class="lang">ENG<br />US</span>
          <svg width="24" height="26" viewBox="0 0 24 26"><path d="M15 2H2v17h16v-5M5 24h12M8 19v5M13 19v5" fill="none" stroke="#222" stroke-width="1.600" /><path d="M17 2h6v7h-6zM20 9v14" fill="none" stroke="#222" stroke-width="1.600" /></svg>
          <svg width="26" height="22" viewBox="0 0 26 22"><path d="M1 8h4l6-6v18l-6-6H1z" fill="none" stroke="#222" stroke-width="1.600" /><path d="M14 7q3 4 0 8m4-11q5 7 0 14m4-17q6 10 0 20" fill="none" stroke="#222" stroke-width="1.500" /></svg>
          <svg width="26" height="22" viewBox="0 0 26 22"><rect x="1" y="5" width="21" height="14" rx="3" fill="none" stroke="#222" stroke-width="1.600" /><rect x="4" y="8" width="15" height="8" fill="#222" /><path d="M23 9h2v6h-2z" /><path d="m6 0-6 8h5l-3 6 8-8H5z" fill="#111" stroke="#deebf0" /></svg>
          <span class="clock">10:06 AM<br />12/02/2025</span>
        </div>
      </div>
    </footer>
  </div>
</template>

<style>
body {
  margin: 0;
  overflow: hidden;
}
</style>

<style scoped>
.defs { position: absolute; width: 0; height: 0; }
.glyph { font: bold 15px "Liberation Sans", Arial, sans-serif; fill: #00f; }
.glyph.big { font-size: 17px; }
.serif { font: bold 20px "Liberation Serif", serif; fill: #000; }
.count { font: bold 16px "Liberation Sans", Arial, sans-serif; fill: #fff; }
.badge { font: 17px "Open Sans", "Noto Sans", sans-serif; fill: #fff; }
button, input, select { font: inherit; color: inherit; }
button { padding: 0; border: 0; background: none; display: flex; align-items: center; justify-content: center; }
svg { flex: none; display: block; }
.screen {
  height: 100vh; display: flex; flex-direction: column; overflow: hidden; box-sizing: border-box;
  font: 18px/20px "Liberation Sans", Arial, sans-serif; color: #000; white-space: nowrap;
}
.topbar {
  display: flex; height: 62px; flex: none; box-sizing: border-box; background: #9bb8c5;
  border: solid #445a66; border-width: 1px 2px 2px 1px;
}
.brand { width: 179px; background: #000; display: flex; align-items: center; gap: 13px; padding-left: 17px; box-sizing: border-box; }
.brand-mark { color: #5cb3ee; }
.brand-text { display: flex; flex-direction: column; }
.brand-text strong { color: #fff; line-height: 18px; }
.brand-text span { color: #5cb3ee; font-size: 16px; line-height: 18px; }
.menu { display: flex; gap: 18px; padding: 4px 8px 0 20px; }
.cell { border-left: 1px solid #6f8d9b; box-sizing: border-box; }
.help { width: 89px; gap: 10px; padding: 2px 0 0 4px; }
.finder { width: 163px; display: flex; align-items: center; gap: 14px; padding-left: 13px; }
.search {
  display: flex; align-items: center; width: 113px; height: 44px; box-sizing: border-box; padding: 0 4px;
  background: #fff; border: 2px solid #8ea5b0; border-radius: 4px;
}
.search input { width: 80px; padding: 0; border: 0; outline: 0; background: none; font-style: italic; }
.search input::placeholder { color: #9c9c9c; opacity: 1; }
.scroll-left { width: 21px; border-left-width: 2px; }
.quick { flex: 1; display: flex; align-items: center; border-left-width: 2px; }
.quick button { flex: none; }
.scroll-right { width: 20px; background: #afccd9; }
.template { width: 240px; display: flex; align-items: center; gap: 15px; padding-left: 15px; }
.pick { display: flex; align-items: center; }
.pick select { appearance: none; border: 0; padding: 0; background: none; outline: 0; }
.template .pick { gap: 11px; }
.status { display: flex; align-items: center; gap: 14px; padding: 0 16px 0 8px; }
.window { width: 132px; display: flex; flex-direction: column; align-items: flex-end; justify-content: center; gap: 6px; padding: 5px 10px 0 0; box-sizing: border-box; }
.window-icons { display: flex; align-items: center; gap: 7px; }
.window span { color: #566b76; line-height: 20px; }
.chartbar {
  display: flex; align-items: center; height: 41px; flex: none; box-sizing: border-box;
  background: linear-gradient(#b8d6e3, #99b6c3); border: solid #445a66; border-width: 0 2px 2px 1px;
}
.bar-cell { height: 100%; box-sizing: border-box; border-right: 1px solid #6f8d9b; }
.mark { width: 41px; padding-left: 3px; color: #2a90cc; }
.chain { width: 30px; }
.chartbar select, .indicators { font-weight: bold; }
.sym { width: 79px; padding-left: 5px; gap: 9px; }
.watch { width: 37px; display: flex; align-items: center; padding-left: 5px; }
.watch button { width: 25px; height: 28px; border: 2px solid #7d919b; border-radius: 4px; box-sizing: border-box; padding: 2px 0 0 3px; }
.frame { width: 82px; padding-left: 6px; gap: 10px; }
.units { width: 109px; padding-left: 7px; gap: 8px; }
.indicators { width: 145px; gap: 8px; }
.ind-more { width: 23px; }
.info {
  width: 20px; height: 20px; margin: 2px 9px 0 11px; box-sizing: border-box; border: 1px solid #f4f7f8; outline: 1px solid #93a5ad;
  background: #dfe6ea; color: #77858c; text-align: center; font: bold 18px/18px "Liberation Serif", serif;
}
h1 { margin: 0; font: inherit; }
.change { margin: 0 6px 0 8px; width: 72px; height: 28px; box-sizing: border-box; border: 1px solid #35c73a; border-radius: 3px; background: #56e556; color: #fff; line-height: 26px; text-align: center; }
.day { font-weight: bold; }
.dot { width: 14px; height: 14px; margin: 4px 0 0 13px; box-sizing: border-box; border: 2px solid #7c878d; border-radius: 50%; background: #eef1f2; outline: 1px solid #d8e2e7; }
.chart-window { margin-left: auto; height: 100%; display: flex; align-items: center; gap: 9px; padding-right: 9px; }
.refresh { width: 40px; height: 100%; box-sizing: border-box; border: solid #6f8d9b; border-width: 0 1px; }
.work { flex: 1; min-height: 0; display: flex; }
.tools {
  width: 51px; flex: none; box-sizing: border-box; background: #9bb8c5; border: solid #6f8893; border-width: 0 2px 0 1px; padding-top: 3px;
  display: flex; flex-direction: column;
}
.tools > button { height: 42px; flex: none; padding-left: 1px; }
.tools-foot { margin-top: auto; height: 94px; border-top: 2px solid #6f8893; display: flex; flex-direction: column; gap: 17px; padding-top: 5px; box-sizing: border-box; }
.panes {
  flex: 1; min-width: 0; display: flex; flex-direction: column; border-right: 2px solid #445a66;
  background: linear-gradient(#fff, #d9e3ff);
}
.pane { min-height: 0; flex: 619 1 0; display: flex; box-sizing: border-box; border-bottom: 1px solid #768d97; }
.macd { flex-grow: 182; }
.vol { flex-grow: 47; }
.stoch { flex-grow: 53; border-bottom-width: 2px; }
.plot { flex: 1; min-width: 0; position: relative; }
.canvas { position: absolute; inset: 0; width: 100%; height: 100%; }
.canvas * { vector-effect: non-scaling-stroke; }
.cycle { stroke: #000; fill: none; }
.ema { fill: none; stroke-width: 3; stroke-linejoin: round; }
.osc { fill: none; stroke-width: 2; stroke-linejoin: round; }
.osc path { stroke-width: 1.5; }
.axis { width: 75px; flex: none; box-sizing: border-box; border-left: 2px solid #768d97; background: #fff; position: relative; overflow: hidden; }
.tick { position: absolute; left: 0; width: 5px; height: 1px; background: #768d97; }
.tick.minor { width: 3px; }
.value { position: absolute; left: 9px; margin-top: -8px; line-height: 20px; }
.value.zero { margin-top: -15px; }
.value.first { margin-top: -3px; }
.value.hundred { margin-top: -1px; }
.bold { font-weight: bold; }
.price-tag {
  position: absolute; left: 6px; width: 60px; height: 26px; box-sizing: border-box; border: solid #768d97; border-width: 1px 2px 1px 1px;
  background: linear-gradient(#fbffff, #cbd8f2); line-height: 28px; padding-left: 2px; overflow: hidden;
}
.price-tag.wide { width: 66px; }
.legend { position: relative; display: inline-flex; align-items: stretch; height: 31px; vertical-align: top; background: #cbdae1; border-bottom: 1px solid #768d97; box-sizing: border-box; }
.legend.lower { background: #ccdce1; }
.item { display: flex; align-items: center; padding: 0 4px; border-right: 2px solid #768d97; }
.lower .item { padding-top: 1px; }
.chip { appearance: none; width: 16px; height: 17px; margin: 0 6px 0 0; box-sizing: border-box; flex: none; }
input.chip { border: 2px solid #8b979d; }
.price input.chip { margin-right: 5px; }
.wrench { margin-left: 7px; }
.arrows { padding: 0 5px 0 3px; }
.list { padding: 0 6px; }
.year { position: relative; display: flex; width: max-content; height: 27px; }
.year-name { background: #768d97; color: #fff; width: 51px; box-sizing: border-box; padding-left: 4px; line-height: 26px; }
.year-vals { display: flex; align-items: center; gap: 8px; padding: 0 5px 0 7px; background: #fff; border: solid #768d97; border-width: 0 1px 1px 0; }
.low { margin-left: 6px; }
.tag-text { position: absolute; line-height: 18px; }
.note-text { position: absolute; font-size: 24px; line-height: 24px; }
.source { position: absolute; left: 3px; bottom: 0; font-size: 16px; line-height: 18px; }
.timeline { height: 20px; flex: none; background: #fff; }
.months { position: relative; height: 20px; margin-right: 75px; border-right: 0; overflow: hidden; }
.months i { position: absolute; top: 0; width: 1px; height: 4px; background: #768d97; }
.months span { position: absolute; top: 9px; transform: translateX(-50%); line-height: 20px; }
.latest { position: absolute; right: 0; top: 0; width: 25px; height: 22px; padding-top: 7px; background: #2f6cc8; align-items: flex-start; }
.taskbar { height: 51px; flex: none; overflow: hidden; box-sizing: border-box; border-top: 2px solid #b3bdc1; background: linear-gradient(90deg, #e0eae8, #deedf4 35%, #dce9f1 70%, #dfeaf0); font-family: "Open Sans", "Noto Sans", sans-serif; }
.task-row { height: 70px; display: grid; grid-template-columns: 1fr auto 1fr; align-items: center; }
.weather { position: relative; display: flex; padding-left: 31px; height: 62px; }
.temp { display: flex; flex-direction: column; font-size: 16px; line-height: 24px; margin-top: 5px; color: #222; }
.sky { color: #555; }
.ghost { margin: 16px 0 0 15px; color: #d3dcdd; }
.apps { display: flex; align-items: center; gap: 20px; }
.task-search { position: relative; width: 327px; height: 48px; box-sizing: border-box; border: 1px solid #cbd8dd; border-radius: 24px; background: #f5f9fa; display: flex; align-items: center; gap: 14px; padding-left: 17px; }
.task-search input { width: 160px; padding: 0; border: 0; outline: 0; background: none; font-size: 19px; }
.task-search input::placeholder { color: #5a5f63; opacity: 1; }
.moon { position: absolute; right: 6px; top: 2px; }
.tile { width: 57px; height: 58px; box-sizing: border-box; display: flex; align-items: center; justify-content: center; background: #eaf2f6; border: 1px solid #d9e4ea; border-radius: 6px; }
.prt { width: 34px; height: 34px; margin-left: 12px; border-radius: 3px; background: #000; color: #4fa9e6; display: flex; align-items: center; justify-content: center; }
.photos { margin-left: 12px; }
.tray { display: flex; align-items: center; justify-content: flex-end; gap: 12px; padding-right: 30px; color: #222; font-size: 17px; line-height: 24px; }
.t1 { margin-right: 14px; }
.t2 { margin-right: 10px; }
.t3 { margin-right: 15px; }
.lang { text-align: center; margin-right: 16px; }
.clock { text-align: right; margin-left: 12px; }
</style>
